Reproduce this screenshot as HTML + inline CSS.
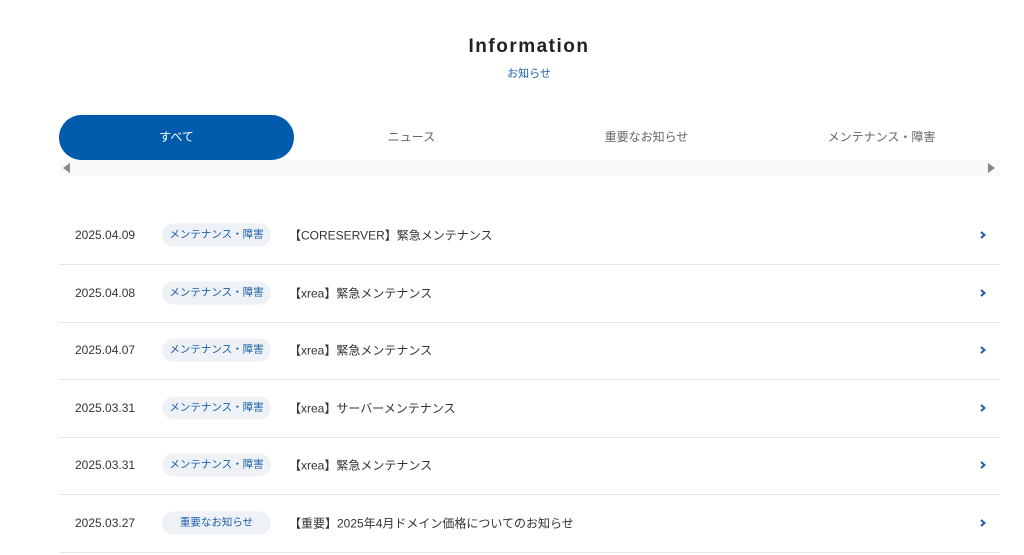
<!DOCTYPE html>
<html><head><meta charset="utf-8"><style>
*{margin:0;padding:0;box-sizing:border-box}
body{width:1024px;height:555px;overflow:hidden;background:#fff;font-family:"Liberation Sans","Noto Sans CJK JP",sans-serif;color:#333;position:relative}
h1{position:absolute;top:36px;left:0;width:1058px;text-align:center;font-size:19px;letter-spacing:1.5px;font-weight:bold;color:#222}
.sub{position:absolute;top:65px;left:0;width:1058px;text-align:center;font-size:11px;color:#1a5fa8}
.tab{position:absolute;top:115px;height:45px;width:235px;line-height:45px;text-align:center;font-size:12px;color:#666}
.tab.on{background:#005bac;color:#fff;border-radius:23px}
.track{position:absolute;left:59px;top:160px;width:941px;height:16px;background:#f9f9f9}
.la{position:absolute;left:63px;top:163px;width:0;height:0;border-top:5px solid transparent;border-bottom:5px solid transparent;border-right:7px solid #888}
.ra{position:absolute;left:988px;top:163px;width:0;height:0;border-top:5px solid transparent;border-bottom:5px solid transparent;border-left:7px solid #888}
.row{position:absolute;left:59px;width:941px;height:57.6px;border-bottom:1px solid #e6e6e6;font-size:12px}
.d{position:absolute;left:16px;top:50%;transform:translateY(-50%);color:#333}
.b{position:absolute;left:103px;top:50%;transform:translateY(-50%);width:109px;height:23px;line-height:23px;text-align:center;background:#eef2f6;border-radius:12px;color:#1a5fa8;font-size:10.5px}
.t{position:absolute;left:230px;top:50%;transform:translateY(-50%);font-size:12px;color:#333}
.c{position:absolute;right:14px;top:50%;transform:translateY(-50%)}
</style></head><body>
<h1>Information</h1>
<div class="sub">お知らせ</div>
<div class="tab on" style="left:59px">すべて</div>
<div class="tab" style="left:294px">ニュース</div>
<div class="tab" style="left:529px">重要なお知らせ</div>
<div class="tab" style="left:764px">メンテナンス・障害</div>
<div class="track"></div><div class="la"></div><div class="ra"></div>

<div class="row" style="top:207px"><span class="d">2025.04.09</span><span class="b">メンテナンス・障害</span><span class="t">【CORESERVER】緊急メンテナンス</span><svg class="c" width="6" height="8" viewBox="0 0 6 8"><path d="M1 1L4.5 4L1 7" stroke="#1a5fa8" stroke-width="2" fill="none"/></svg></div>
<div class="row" style="top:265px"><span class="d">2025.04.08</span><span class="b">メンテナンス・障害</span><span class="t">【xrea】緊急メンテナンス</span><svg class="c" width="6" height="8" viewBox="0 0 6 8"><path d="M1 1L4.5 4L1 7" stroke="#1a5fa8" stroke-width="2" fill="none"/></svg></div>
<div class="row" style="top:322px"><span class="d">2025.04.07</span><span class="b">メンテナンス・障害</span><span class="t">【xrea】緊急メンテナンス</span><svg class="c" width="6" height="8" viewBox="0 0 6 8"><path d="M1 1L4.5 4L1 7" stroke="#1a5fa8" stroke-width="2" fill="none"/></svg></div>
<div class="row" style="top:380px"><span class="d">2025.03.31</span><span class="b">メンテナンス・障害</span><span class="t">【xrea】サーバーメンテナンス</span><svg class="c" width="6" height="8" viewBox="0 0 6 8"><path d="M1 1L4.5 4L1 7" stroke="#1a5fa8" stroke-width="2" fill="none"/></svg></div>
<div class="row" style="top:437px"><span class="d">2025.03.31</span><span class="b">メンテナンス・障害</span><span class="t">【xrea】緊急メンテナンス</span><svg class="c" width="6" height="8" viewBox="0 0 6 8"><path d="M1 1L4.5 4L1 7" stroke="#1a5fa8" stroke-width="2" fill="none"/></svg></div>
<div class="row" style="top:495px"><span class="d">2025.03.27</span><span class="b">重要なお知らせ</span><span class="t">【重要】2025年4月ドメイン価格についてのお知らせ</span><svg class="c" width="6" height="8" viewBox="0 0 6 8"><path d="M1 1L4.5 4L1 7" stroke="#1a5fa8" stroke-width="2" fill="none"/></svg></div>
</body></html>
